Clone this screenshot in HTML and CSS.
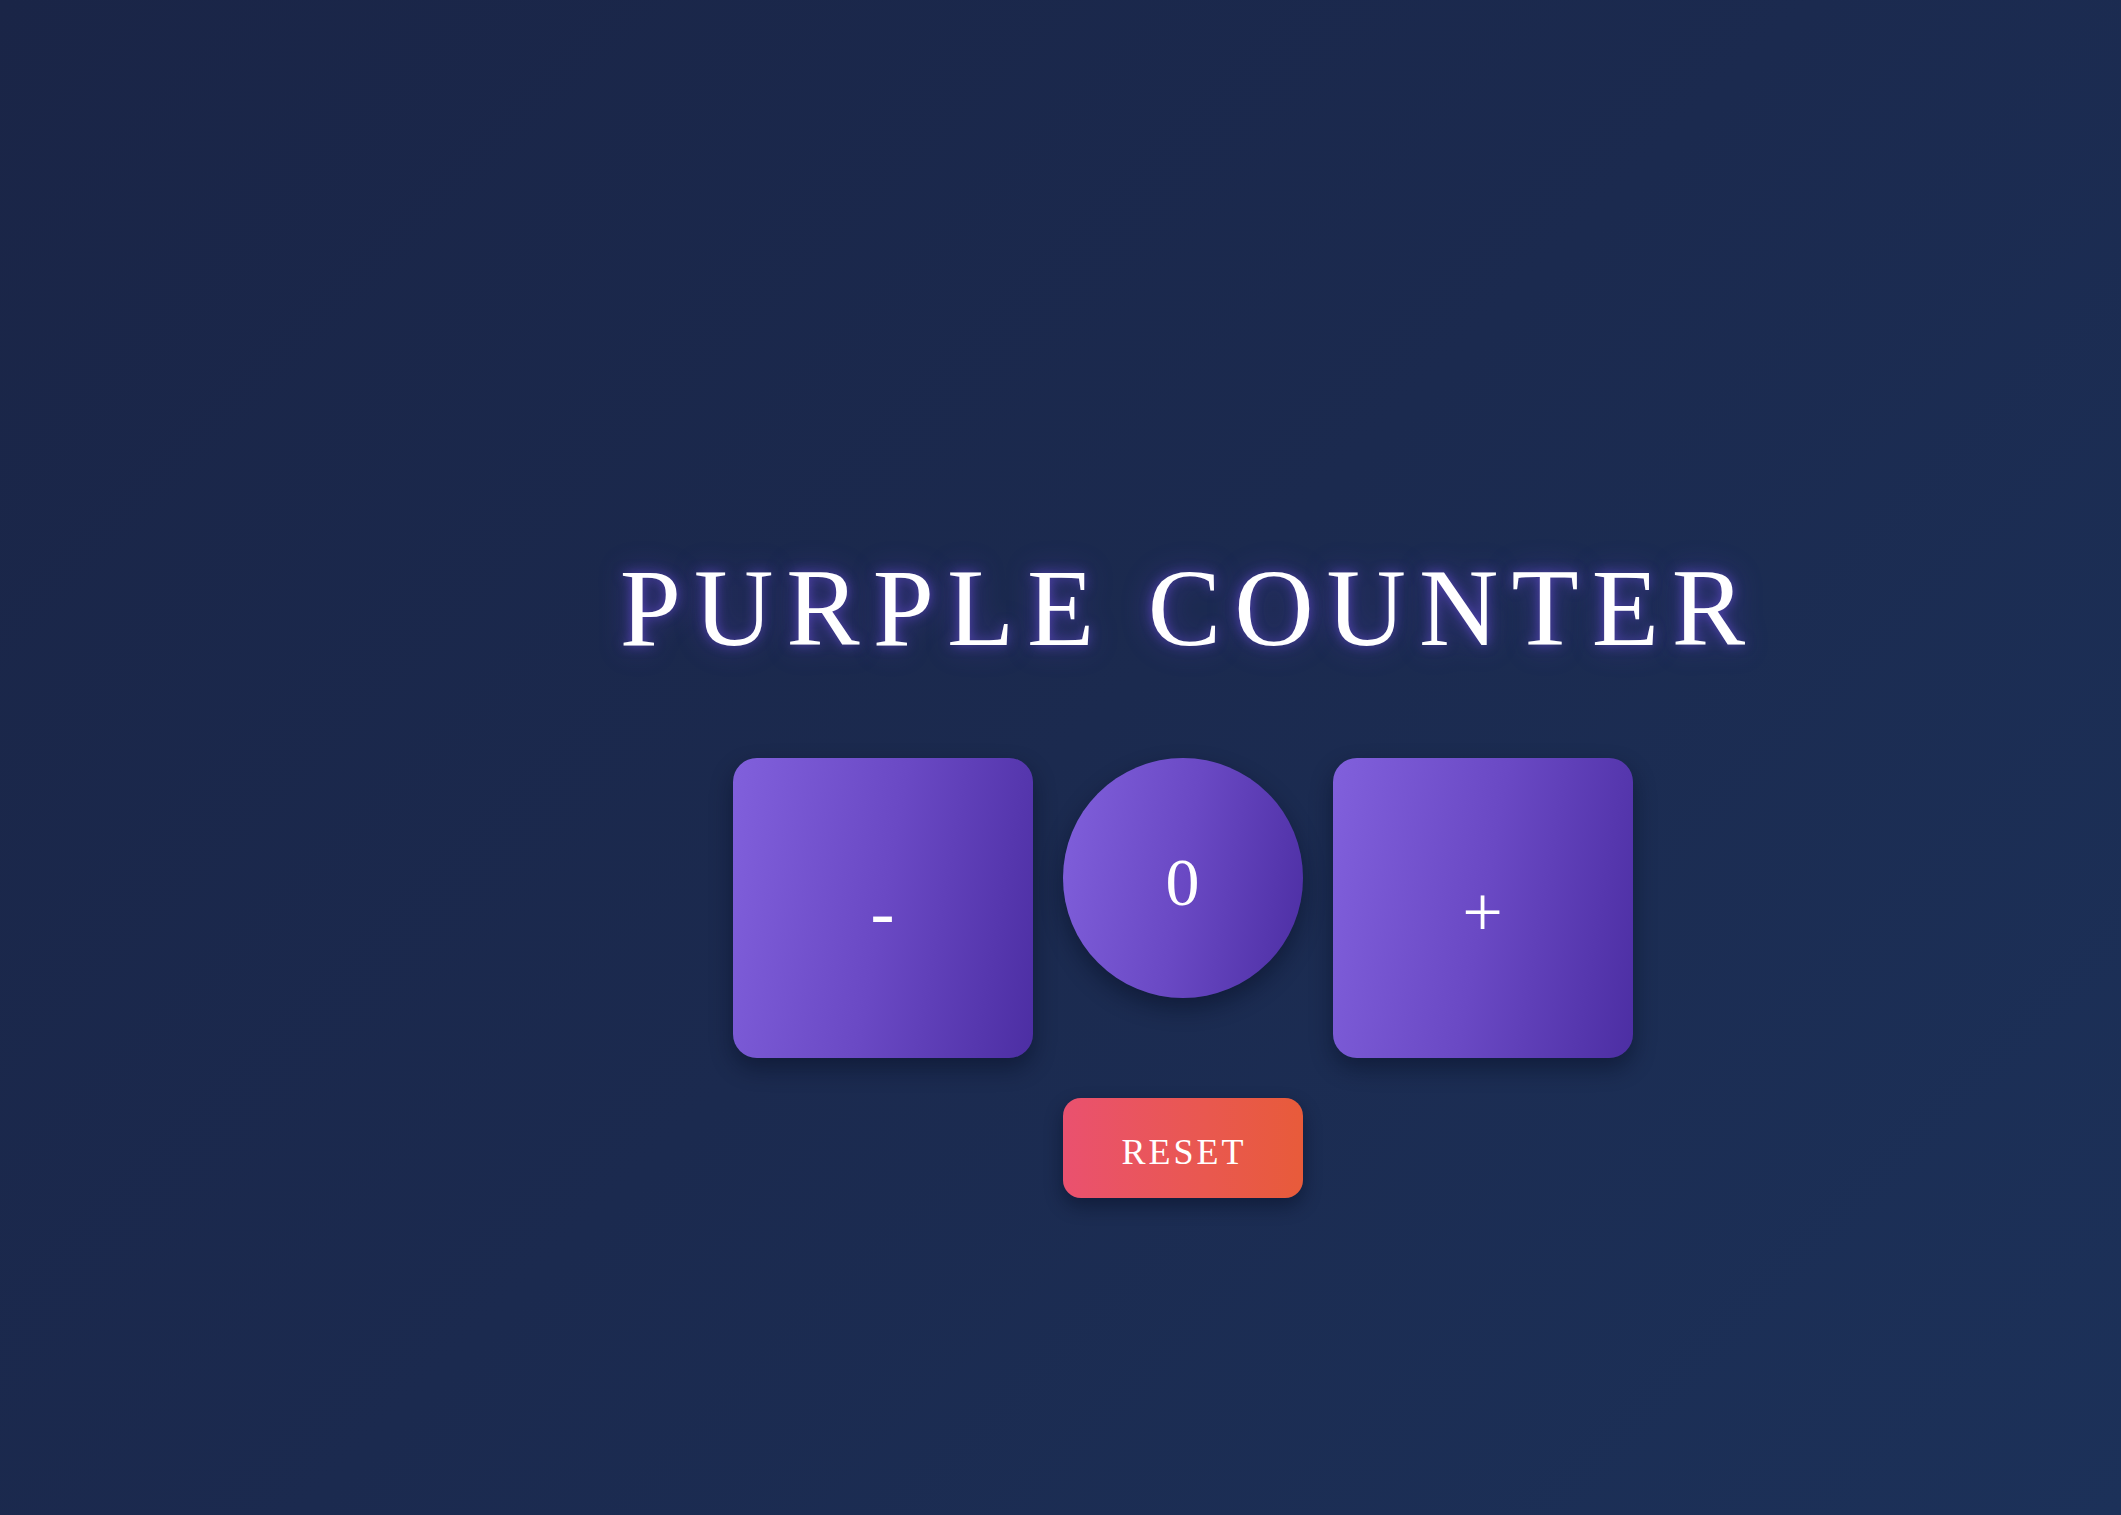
FILE: index.html
```html
<!DOCTYPE html>
<html lang="en">
<head>
<meta charset="utf-8">
<title>Purple Counter</title>
<link rel="stylesheet" href="styles.css">
</head>
<body>
<main class="app">
  <h1 class="title">PURPLE COUNTER</h1>
  <div class="counter-row">
    <button class="tile">-</button>
    <div class="value">0</div>
    <button class="tile">+</button>
  </div>
  <button class="reset">RESET</button>
</main>
</body>
</html>
```

FILE: styles.css
```css
html, body {
  margin: 0;
  padding: 0;
}
body {
  min-height: 100vh;
  background: linear-gradient(135deg, #1a2547 0%, #1b2a4f 50%, #1c3159 100%);
  font-family: "Liberation Serif", "Times New Roman", serif;
  color: #fff;
}
.app {
  box-sizing: border-box;
  min-height: 100vh;
  display: flex;
  flex-direction: column;
  align-items: center;
  padding-top: 553px;
  padding-left: 244px;
}
.title {
  margin: 0;
  font-size: 110px;
  line-height: 1;
  font-weight: 400;
  letter-spacing: 13px;
  padding-left: 13px;
  color: #fff;
  text-shadow: 0 0 12px rgba(130, 90, 255, 0.55), 0 0 30px rgba(110, 70, 230, 0.45);
}
.counter-row {
  margin-top: 95px;
  display: flex;
  align-items: flex-start;
  gap: 30px;
}
.tile {
  width: 300px;
  height: 300px;
  border: none;
  border-radius: 24px;
  background: linear-gradient(100deg, #8160dc 0%, #6a49c4 50%, #4c2ea3 100%);
  box-shadow: 0 10px 22px rgba(5, 10, 30, 0.45);
  color: #fff;
  font-family: "Liberation Serif", serif;
  font-size: 72px;
  line-height: 1;
  padding: 8px 0 0;
  display: flex;
  align-items: center;
  justify-content: center;
}
.value {
  width: 240px;
  height: 240px;
  border-radius: 50%;
  background: linear-gradient(100deg, #8160dc 0%, #6a49c4 50%, #4c2ea3 100%);
  box-shadow: 0 10px 22px rgba(5, 10, 30, 0.45);
  display: flex;
  align-items: center;
  justify-content: center;
  font-size: 68px;
  line-height: 1;
  padding-top: 8px;
  box-sizing: border-box;
}
.reset {
  margin-top: 40px;
  width: 240px;
  height: 100px;
  border: none;
  border-radius: 18px;
  background: linear-gradient(90deg, #ea516f 0%, #e9584f 60%, #e85b3a 100%);
  box-shadow: 0 8px 18px rgba(5, 10, 30, 0.45);
  color: #fff;
  font-family: "Liberation Serif", serif;
  font-size: 36px;
  letter-spacing: 3px;
  padding: 8px 0 0 3px;
}
```
